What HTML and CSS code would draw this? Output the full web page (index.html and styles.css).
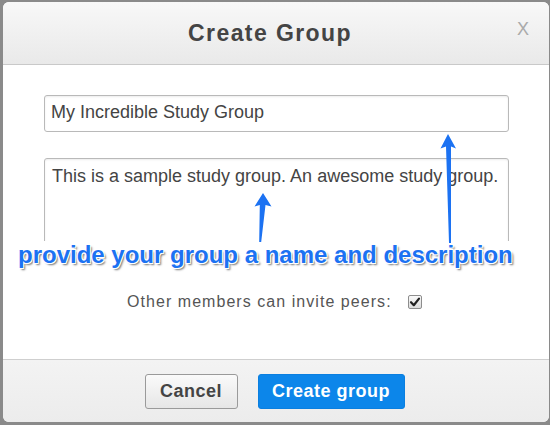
FILE: index.html
```html
<!DOCTYPE html>
<html>
<head>
<meta charset="utf-8">
<link rel="stylesheet" href="styles.css">
</head>
<body>
<div class="dialog">
  <div class="header">
    <h1 class="title">Create Group</h1>
    <span class="close">X</span>
  </div>
  <div class="content">
    <input class="field" type="text" value="My Incredible Study Group">
    <textarea class="area">This is a sample study group. An awesome study group.</textarea>
    <div class="option">
      <span class="option-label">Other members can invite peers:</span>
      <span class="check"><svg viewBox="0 0 14 14" width="14" height="14"><path d="M3 7.2 L5.8 10.2 L11 3.6" fill="none" stroke="#222" stroke-width="2.2" stroke-linecap="round" stroke-linejoin="round"/></svg></span>
    </div>
    <div class="annotation">provide your group a name and description</div>
  </div>
  <div class="footer">
    <button class="btn btn-cancel">Cancel</button>
    <button class="btn btn-primary">Create group</button>
  </div>
  <svg class="arrows" viewBox="3 2 546 420" width="546" height="420">
    <polygon points="263,193 271.5,206.5 265.5,205 261.2,242 259.2,242 259.8,205 254.5,206.5" fill="#1c72f2"/>
    <polygon points="448,134 456,148.5 451,146.5 451,243 449,243 446,146.5 440.5,148.5" fill="#1c72f2"/>
  </svg>
</div>
</body>
</html>
```

FILE: styles.css
```css
html, body {
  margin: 0;
  padding: 0;
}
body {
  background: #8a8a8a;
  width: 550px;
  height: 425px;
  overflow: hidden;
  padding: 2px 0 0 3px;
  box-sizing: border-box;
  font-family: "Liberation Sans", Arial, sans-serif;
}
.dialog {
  position: relative;
  width: 546px;
  height: 420px;
  background: #fff;
  border-radius: 6px;
  overflow: hidden;
  display: flex;
  flex-direction: column;
}
.header {
  position: relative;
  height: 62px;
  flex: none;
  background: linear-gradient(#f8f8f8, #e9e9e9);
  border-bottom: 1px solid #c9c9c9;
  display: flex;
  align-items: center;
  justify-content: center;
}
.title {
  margin: 0 0 0 -12px;
  font-size: 23px;
  font-weight: bold;
  letter-spacing: 1.4px;
  color: #444;
}
.close {
  position: absolute;
  right: 20px;
  top: 17px;
  font-size: 18px;
  color: #aaa;
}
.content {
  position: relative;
  flex: 1;
  padding: 30px 0 0 41px;
  display: flex;
  flex-direction: column;
}
.field, .area {
  box-sizing: border-box;
  width: 465px;
  margin: 0;
  border: 1px solid #b9b9b9;
  border-radius: 3px;
  box-shadow: inset 0 1px 2px rgba(0,0,0,0.08);
  font-family: "Liberation Sans", Arial, sans-serif;
  font-size: 18px;
  color: #444;
  background: #fff;
  outline: none;
}
.field {
  height: 37px;
  padding: 0 0 2px 6px;
}
.area {
  margin-top: 26px;
  height: 100px;
  padding: 7px 0 0 7px;
  resize: none;
  overflow: hidden;
  line-height: 21px;
}
.option {
  margin-top: 35px;
  display: flex;
  align-items: center;
  padding-left: 83px;
  gap: 16px;
}
.option-label {
  font-size: 16px;
  letter-spacing: 1.05px;
  color: #555;
}
.check {
  width: 14px;
  height: 14px;
  box-sizing: border-box;
  border: 1px solid #8d8d8d;
  border-radius: 2px;
  background: linear-gradient(#fafafa, #dcdcdc);
  display: flex;
}
.check svg {
  display: block;
  margin: -1px;
}
.annotation {
  position: absolute;
  left: 15px;
  top: 176px;
  background: #fff;
  padding: 0 4px 2px 0;
  font-size: 24px;
  font-weight: bold;
  line-height: 28px;
  color: #1c72f2;
  white-space: nowrap;
  text-shadow: -1px -1px 0 #fff, 1px -1px 0 #fff, -1px 1px 0 #fff, 1px 1px 0 #fff, 2px 2px 2px rgba(0,0,0,0.55);
}
.footer {
  height: 48px;
  flex: none;
  border-top: 1px solid #cfcfcf;
  background: linear-gradient(#f3f3f3, #ececec);
  padding-top: 14px;
  display: flex;
  justify-content: center;
  align-items: flex-start;
  gap: 20px;
  padding-right: 3px;
}
.btn {
  height: 35px;
  border-radius: 3px;
  font-family: "Liberation Sans", Arial, sans-serif;
  font-size: 18px;
  font-weight: bold;
  letter-spacing: 0.5px;
  padding: 0;
  margin: 0;
}
.btn-cancel {
  width: 93px;
  border: 1px solid #9a9a9a;
  background: linear-gradient(#fafafa, #e6e6e6);
  color: #444;
}
.btn-primary {
  width: 147px;
  border: 1px solid #0a7fe0;
  background: #0c86ea;
  color: #fff;
}
.arrows {
  position: absolute;
  left: 0;
  top: 0;
  pointer-events: none;
}
```
